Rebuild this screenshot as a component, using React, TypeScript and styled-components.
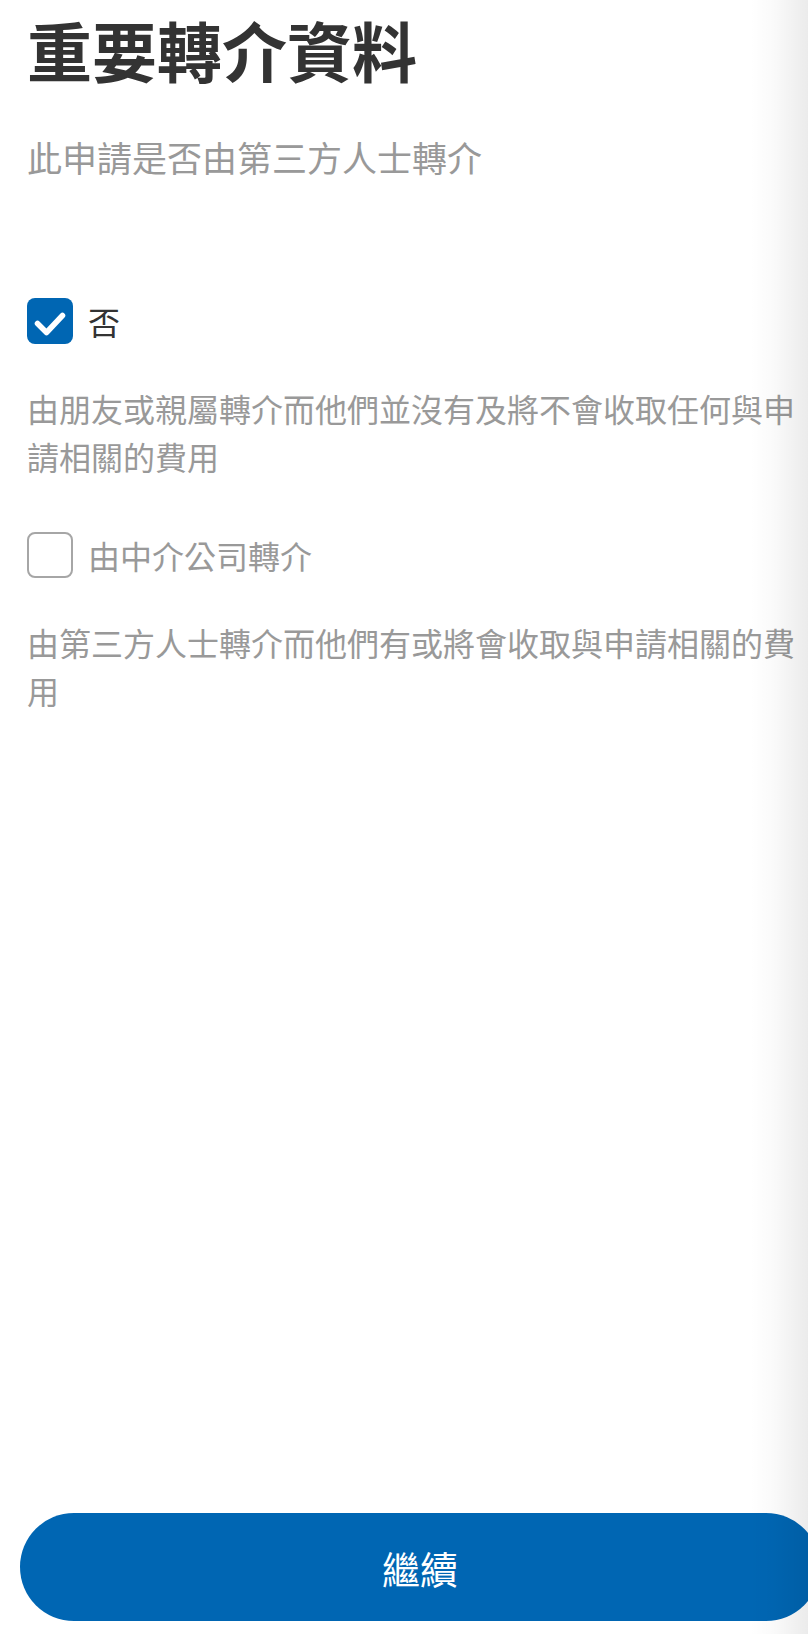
import React, { useState } from "react";
import styled, { createGlobalStyle } from "styled-components";

const GlobalStyle = createGlobalStyle`
  html, body { margin: 0; padding: 0; background: #ffffff; }
  body { overflow: hidden; }
  * { box-sizing: border-box; }
`;

const FONT = `"Noto Sans CJK TC", "Noto Sans CJK SC", "Noto Sans", sans-serif`;
const BLUE = "#0066b3";

const Viewport = styled.div`
  position: relative;
  width: 808px;
  height: 1634px;
  overflow: hidden;
  background: #ffffff;
`;

const Page = styled.main`
  width: 840px;
  height: 1634px;
  display: flex;
  flex-direction: column;
  padding: 17px 27px 13px 27px;
  font-family: ${FONT};
`;

const Title = styled.h1`
  margin: 0;
  font-size: 65px;
  line-height: 65px;
  font-weight: 700;
  color: #333333;
`;

const Subtitle = styled.p`
  margin: 57px 0 0 0;
  font-size: 35px;
  line-height: 35px;
  color: #999999;
`;

const Options = styled.div`
  display: flex;
  flex-direction: column;
  margin-top: 124px;
`;

const Option = styled.div<{ $first?: boolean }>`
  display: flex;
  flex-direction: column;
  margin-top: ${(p) => (p.$first ? "0" : "52px")};
`;

const Row = styled.label`
  display: flex;
  align-items: center;
  gap: 15px;
  cursor: pointer;
`;

const Box = styled.span<{ $checked: boolean }>`
  width: 46px;
  height: 46px;
  flex: 0 0 46px;
  border-radius: 8px;
  display: flex;
  align-items: center;
  justify-content: center;
  background: ${(p) => (p.$checked ? BLUE : "#ffffff")};
  border: ${(p) => (p.$checked ? "none" : "2px solid #a6a6a6")};
`;

const Label = styled.span<{ $checked: boolean }>`
  font-size: 32px;
  line-height: 32px;
  color: ${(p) => (p.$checked ? "#333333" : "#999999")};
`;

const Desc = styled.p`
  margin: 40px 0 0 0;
  font-size: 32px;
  line-height: 48px;
  color: #999999;
`;

const Spacer = styled.div`
  flex: 1;
`;

const Button = styled.button`
  margin: 0 -7px;
  height: 108px;
  border: none;
  border-radius: 54px;
  background: ${BLUE};
  color: #ffffff;
  font-family: ${FONT};
  font-size: 38px;
  font-weight: 400;
  cursor: pointer;
`;

const EdgeShade = styled.div`
  position: absolute;
  top: 0;
  right: 0;
  width: 58px;
  height: 100%;
  pointer-events: none;
  background: linear-gradient(
    to right,
    rgba(0, 0, 0, 0) 0%,
    rgba(0, 0, 0, 0.02) 40%,
    rgba(0, 0, 0, 0.08) 100%
  );
`;

const Check = () => (
  <svg width="46" height="46" viewBox="0 0 46 46" fill="none">
    <path
      d="M10.5 25.5 L19.5 34.5 L35.5 17.5"
      stroke="#ffffff"
      strokeWidth="5.5"
      strokeLinecap="round"
      strokeLinejoin="round"
    />
  </svg>
);

const options = [
  {
    label: "否",
    desc: "由朋友或親屬轉介而他們並沒有及將不會收取任何與申請相關的費用",
  },
  {
    label: "由中介公司轉介",
    desc: "由第三方人士轉介而他們有或將會收取與申請相關的費用",
  },
];

export default function App() {
  const [selected, setSelected] = useState(0);
  return (
    <>
      <GlobalStyle />
      <Viewport>
        <Page>
          <Title>重要轉介資料</Title>
          <Subtitle>此申請是否由第三方人士轉介</Subtitle>
          <Options>
            {options.map((o, i) => {
              const checked = selected === i;
              return (
                <Option key={o.label} $first={i === 0}>
                  <Row onClick={() => setSelected(i)}>
                    <Box $checked={checked}>{checked && <Check />}</Box>
                    <Label $checked={checked}>{o.label}</Label>
                  </Row>
                  <Desc>{o.desc}</Desc>
                </Option>
              );
            })}
          </Options>
          <Spacer />
          <Button type="button">繼續</Button>
        </Page>
        <EdgeShade />
      </Viewport>
    </>
  );
}
